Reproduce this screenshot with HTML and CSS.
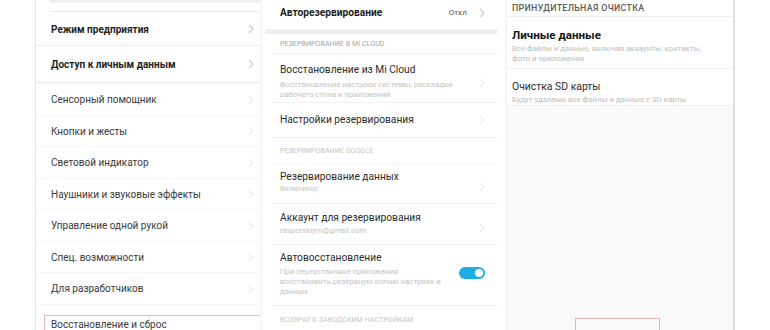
FILE: index.html
```html
<!DOCTYPE html>
<html lang="ru">
<head>
<meta charset="utf-8">
<link rel="stylesheet" href="styles.css">
</head>
<body>
<div class="canvas">
  <div class="side-left"></div>

  <section class="panel p1">
    <div class="p1-top"></div>
    <div class="p1-row strong first"><span>Режим предприятия</span><svg class="chev" viewBox="0 0 6 10"><polyline points="1,1 5,5 1,9"/></svg></div>
    <div class="p1-row strong second"><span>Доступ к личным данным</span><svg class="chev" viewBox="0 0 6 10"><polyline points="1,1 5,5 1,9"/></svg></div>
    <div class="p1-list">
      <div class="p1-row"><span>Сенсорный помощник</span><svg class="chev faint" viewBox="0 0 6 10"><polyline points="1,1 5,5 1,9"/></svg></div>
      <div class="p1-row"><span>Кнопки и жесты</span><svg class="chev faint" viewBox="0 0 6 10"><polyline points="1,1 5,5 1,9"/></svg></div>
      <div class="p1-row"><span>Световой индикатор</span><svg class="chev faint" viewBox="0 0 6 10"><polyline points="1,1 5,5 1,9"/></svg></div>
      <div class="p1-row"><span>Наушники и звуковые эффекты</span><svg class="chev faint" viewBox="0 0 6 10"><polyline points="1,1 5,5 1,9"/></svg></div>
      <div class="p1-row"><span>Управление одной рукой</span><svg class="chev faint" viewBox="0 0 6 10"><polyline points="1,1 5,5 1,9"/></svg></div>
      <div class="p1-row"><span>Спец. возможности</span><svg class="chev faint" viewBox="0 0 6 10"><polyline points="1,1 5,5 1,9"/></svg></div>
      <div class="p1-row"><span>Для разработчиков</span><svg class="chev faint" viewBox="0 0 6 10"><polyline points="1,1 5,5 1,9"/></svg></div>
    </div>
    <div class="p1-highlight"><span>Восстановление и сброс</span></div>
  </section>

  <div class="gap"></div>

  <section class="panel p2">
    <div class="p2-row top"><span class="title strong">Авторезервирование</span><span class="value">Откл</span><svg class="chev" viewBox="0 0 6 10"><polyline points="1,1 5,5 1,9"/></svg></div>
    <div class="band"></div>
    <div class="p2-section h1">РЕЗЕРВИРОВАНИЕ В MI CLOUD</div>
    <div class="p2-row item cloud">
      <div class="txt"><div class="title">Восстановление из Mi Cloud</div><div class="sub">Восстановление настроек системы, раскладки<br>рабочего стола и приложений</div></div>
      <svg class="chev faint" viewBox="0 0 6 10"><polyline points="1,1 5,5 1,9"/></svg>
    </div>
    <div class="p2-row item single"><div class="txt"><div class="title">Настройки резервирования</div></div><svg class="chev faint" viewBox="0 0 6 10"><polyline points="1,1 5,5 1,9"/></svg></div>
    <div class="p2-section h2">РЕЗЕРВИРОВАНИЕ GOOGLE</div>
    <div class="p2-row item two data"><div class="txt"><div class="title">Резервирование данных</div><div class="sub">Включено</div></div><svg class="chev faint" viewBox="0 0 6 10"><polyline points="1,1 5,5 1,9"/></svg></div>
    <div class="p2-row item two account"><div class="txt"><div class="title">Аккаунт для резервирования</div><div class="sub">rasporskiym@gmail.com</div></div><svg class="chev faint" viewBox="0 0 6 10"><polyline points="1,1 5,5 1,9"/></svg></div>
    <div class="p2-row item auto">
      <div class="txt"><div class="title">Автовосстановление</div><div class="sub">При переустановке приложения<br>восстановить резервную копию настроек и<br>данных</div></div>
      <div class="toggle"><div class="knob"></div></div>
    </div>
    <div class="p2-section h3">ВОЗВРАТ К ЗАВОДСКИМ НАСТРОЙКАМ</div>
  </section>

  <div class="gap"></div>

  <section class="panel p3">
    <div class="p3-head">ПРИНУДИТЕЛЬНАЯ ОЧИСТКА</div>
    <div class="p3-item personal"><div class="title strong">Личные данные</div><div class="sub">Все файлы и данные, включая аккаунты, контакты,<br>фото и приложения</div></div>
    <div class="p3-item sd"><div class="title">Очистка SD карты</div><div class="sub">Будут удалены все файлы и данные с SD карты</div></div>
    <div class="p3-rest"><div class="p3-button"></div></div>
  </section>

  <div class="side-right"></div>
</div>
</body>
</html>
```

FILE: styles.css
```css
html, body {
  margin: 0;
  padding: 0;
  background: #ffffff;
}
.canvas {
  display: flex;
  width: 770px;
  height: 330px;
  overflow: hidden;
  font-family: Roboto, "Noto Sans", sans-serif;
  color: #2b2b2b;
}
.side-left { width: 35px; flex: none; background: #fff; }
.side-right { flex: 1; background: #fff; }
.gap { width: 2px; flex: none; background: #f6f6f6; }
.panel { flex: none; display: flex; flex-direction: column; background: #fff; }
.panel > * { flex: none; }

.chev { width: 6px; height: 10px; flex: none; }
.chev polyline { fill: none; stroke: #cdcdcd; stroke-width: 1.2; }
.chev.faint polyline { stroke: #ececec; }

/* ---------- panel 1 ---------- */
.p1 { width: 225px; border-left: 1px solid #e4e4e4; box-sizing: border-box; }
.p1-top {
  height: 12px;
  border-top: 3px solid #f0f0f0;
  box-sizing: border-box;
  border-bottom: 1px solid #e9e9e9;
  margin-left: 14px;
}
.p1-row {
  display: flex;
  align-items: center;
  justify-content: space-between;
  padding: 0 6px 0 15px;
  font-size: 10px;
  color: #3a3a3a;
  flex: none;
  box-sizing: border-box;
}
.p1-row.strong { font-weight: 700; color: #1e1e1e; font-size: 10px; }
.p1-row.first { height: 34px; border-bottom: 1px solid #ececec; padding-top: 1px; }
.p1-row.second { height: 38px; border-bottom: 3px solid #f4f4f4; padding-top: 1px; }
.p1-list { display: flex; flex-direction: column; }
.p1-list .p1-row { height: 31.5px; border-bottom: 1px solid #f7f7f7; padding-top: 1px; }
.p1-highlight {
  margin: 10px 0 0 8px;
  height: 24px;
  border: 1px solid #e9b9b9;
  border-right: none;
  box-sizing: border-box;
  padding: 3px 0 0 6px;
  font-size: 10px;
  color: #3a3a3a;
}

/* ---------- panel 2 ---------- */
.p2 { width: 243px; padding: 0 8px 0 10px; box-sizing: border-box; }
.p2-row {
  display: flex;
  align-items: flex-start;
  padding: 0 12px 0 8px;
  box-sizing: border-box;
}
.p2-row .chev { align-self: center; }
.p2-row .txt { flex: 1; }
.p2-row .title { font-size: 10.2px; line-height: 12px; color: #2b2b2b; }
.p2-row .title.strong { font-weight: 700; color: #1e1e1e; flex: 1; }
.p2-row .sub { font-size: 7.8px; color: #c3c3c3; line-height: 9.5px; }
.p2-row.top { height: 28px; padding-top: 7px; }
.p2-row.top .chev { align-self: flex-start; margin-top: 1px; }
.p2-row .value { font-size: 8px; line-height: 12px; color: #555; margin-right: 12px; }
.band { height: 5px; background: #eeeeee; margin: 1px 0 0 -7px; }
.p2-section {
  font-size: 7px;
  color: #a5a5a5;
  padding-left: 8px;
  display: flex;
  align-items: center;
  letter-spacing: 0.1px;
  box-sizing: border-box;
}
.p2-section.h1 { height: 20px; border-bottom: 1px solid #f3f3f3; }
.p2-section.h2 { height: 26px; color: #c5c5c5; border-bottom: 1px solid #f5f5f5; }
.p2-section.h3 { height: 28px; color: #c5c5c5; }
.p2-row.item { border-bottom: 1px solid #f1f1f1; }
.p2-row.cloud { height: 49px; padding-top: 10px; }
.p2-row.cloud .sub { margin-top: 4px; }
.p2-row.single { height: 35px; align-items: center; }
.p2-row.data { height: 40px; padding-top: 7px; }
.p2-row.data .sub { margin-top: 1px; }
.p2-row.account { height: 41px; padding-top: 8px; }
.p2-row.account .sub { margin-top: 2px; }
.p2-row.auto { height: 61px; padding-top: 7px; }
.p2-row.auto .sub { margin-top: 3px; line-height: 10px; }
.toggle {
  width: 26px;
  height: 12px;
  border-radius: 6px;
  background: #1eaee6;
  margin-top: 15px;
  position: relative;
  flex: none;
}
.knob {
  position: absolute;
  right: 2px;
  top: 2px;
  width: 8px;
  height: 8px;
  border-radius: 50%;
  background: #fff;
}

/* ---------- panel 3 ---------- */
.p3 { width: 228px; border-right: 2px solid #dedede; box-sizing: border-box; }
.p3-head {
  height: 17px;
  padding-left: 5px;
  font-size: 8.8px;
  font-weight: 500;
  letter-spacing: 0.35px;
  color: #5a5a5a;
  display: flex;
  align-items: center;
  border-bottom: 1px solid #ececec;
  box-sizing: border-box;
}
.p3-item { padding: 0 0 0 5px; box-sizing: border-box; border-bottom: 1px solid #f0f0f0; }
.p3-item .title { font-size: 10.4px; color: #2b2b2b; }
.p3-item .title.strong { font-weight: 700; color: #151515; font-size: 11.6px; }
.p3-item .sub { font-size: 7.8px; color: #bdbdbd; line-height: 10px; margin-top: 2px; }
.p3-item.personal { height: 52px; padding-top: 11px; }
.p3-item.sd { height: 37px; padding-top: 11px; }
.p3-rest { flex: 1 1 auto; background: #fafafa; display: flex; justify-content: flex-start; align-items: flex-end; }
.p3-button {
  width: 85px;
  height: 12px;
  margin-left: 68px;
  border: 1px solid #e7b3b3;
  border-bottom: none;
  box-sizing: border-box;
}
```
